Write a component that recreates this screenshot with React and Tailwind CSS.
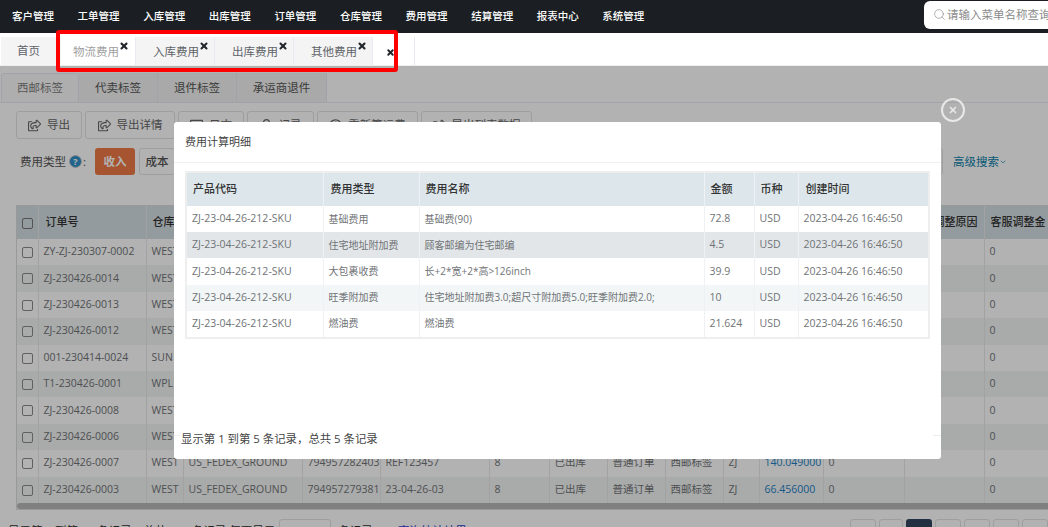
import React from "react";
import { Search, X, ChevronDown } from "lucide-react";
import { FaRegShareSquare, FaRegClock, FaRegUser, FaRegListAlt } from "react-icons/fa";

const menus = ["客户管理", "工单管理", "入库管理", "出库管理", "订单管理", "仓库管理", "费用管理", "结算管理", "报表中心", "系统管理"];

const orders = [
  ["ZY-ZJ-230307-0002", "WEST"],
  ["ZJ-230426-0014", "WEST"],
  ["ZJ-230426-0013", "WEST"],
  ["ZJ-230426-0012", "WEST"],
  ["001-230414-0024", "SUN"],
  ["T1-230426-0001", "WPL"],
  ["ZJ-230426-0008", "WEST"],
  ["ZJ-230426-0006", "WEST"],
  ["ZJ-230426-0007", "WEST", "US_FEDEX_GROUND", "794957282403", "REF123457", "8", "已出库", "普通订单", "西邮标签", "ZJ", "140.049000", "0"],
  ["ZJ-230426-0003", "WEST", "US_FEDEX_GROUND", "794957279381", "23-04-26-03", "8", "已出库", "普通订单", "西邮标签", "ZJ", "66.456000", "0"],
];

const fees = [
  ["基础费用", "基础费(90)", "72.8"],
  ["住宅地址附加费", "顾客邮编为住宅邮编", "4.5"],
  ["大包裹收费", "长+2*宽+2*高>126inch", "39.9"],
  ["旺季附加费", "住宅地址附加费3.0;超尺寸附加费5.0;旺季附加费2.0;", "10"],
  ["燃油费", "燃油费", "21.624"],
];

const feeRowBg = ["bg-white", "bg-[#e2e6e9]", "bg-white", "bg-[#f2f6f6]", "bg-white"];

function PageTab({ label, active, width }) {
  return (
    <div className={`relative h-full flex items-center border-r border-[#e7eaf1] text-[11.5px] ${width} ${active ? "bg-white text-[#a0a0a0] pl-[12px]" : "bg-[#f4f4f4] text-[#5f6368] pl-[17px]"}`}>
      <span className="mt-[2px]">{label}</span>
      <X size={10} strokeWidth={5} className={`absolute top-[4px] text-[#23262b] ${active ? "left-[58px]" : "left-[63px]"}`} />
    </div>
  );
}

function ToolButton({ icon, label, width }) {
  return (
    <div className={`h-[28px] flex items-center justify-center gap-[6px] border border-[#e3e3e3] rounded-[3px] text-[11.5px] text-[#666] ${width}`}>
      {icon}
      <span>{label}</span>
    </div>
  );
}

function OrderRow({ row, index }) {
  const cell = "border-r border-[#e8e8e8] px-[5px] whitespace-nowrap overflow-hidden";
  return (
    <tr className={`h-[26.4px] ${index % 2 ? "bg-[#f3f5f4]" : "bg-white"}`}>
      <td className={`${cell} text-center`}>
        <span className="inline-block w-[11px] h-[11px] border border-[#8a8a8a] rounded-[2px] align-middle" />
      </td>
      <td className={cell}>{row[0]}</td>
      <td className={cell}>{row[1]}</td>
      <td className={cell}>{row[2]}</td>
      <td className={cell}>{row[3]}</td>
      <td className={cell}>{row[4]}</td>
      <td className={cell}>{row[5]}</td>
      <td className={cell}>{row[6]}</td>
      <td className={cell}>{row[7]}</td>
      <td className={cell}>{row[8]}</td>
      <td className={cell}>{row[9]}</td>
      <td className={`${cell} text-[#1b7fc4]`}>{row[10]}</td>
      <td className={cell}>{row[11]}</td>
      <td className={cell} />
      <td className={cell}>0</td>
    </tr>
  );
}

export default function App() {
  return (
    <div className="relative w-[1048px] h-[527px] overflow-hidden bg-white font-['Open_Sans','Noto_Sans_CJK_SC',sans-serif] flex flex-col">
      {/* Top menu */}
      <div className="h-[33px] shrink-0 bg-[#1b1f23] flex items-center pl-[12px] justify-between">
        <div className="flex gap-[23.6px] text-[10.5px] font-medium text-white">
          {menus.map((m) => (
            <span key={m}>{m}</span>
          ))}
        </div>
        <div className="w-[124px] h-[28px] -mt-[4px] bg-white rounded-l-[6px] flex items-center pl-[9px] gap-[1px] text-[11.5px] text-[#8b8b8b] whitespace-nowrap overflow-hidden">
          <Search size={13} strokeWidth={1.2} className="shrink-0" />
          <span>请输入菜单名称查询</span>
        </div>
      </div>

      {/* Page tabs */}
      <div className="h-[33px] shrink-0 pt-[4px] pl-[1px] flex border-b border-[#eeeeee]">
        <div className="w-[60px] h-full bg-[#f4f4f4] flex items-center justify-center text-[11.5px] text-[#5f6368] pr-[5px]">首页</div>
        <PageTab label="物流费用" active width="w-[75px]" />
        <PageTab label="入库费用" width="w-[79px]" />
        <PageTab label="出库费用" width="w-[79px]" />
        <PageTab label="其他费用" width="w-[79px]" />
        <div className="w-[42px] h-full border-r border-[#e7eaf1] bg-white relative">
          <X size={9} strokeWidth={5} className="absolute left-[13px] top-[11px] text-[#23262b]" />
        </div>
      </div>

      {/* Page body behind the dialog */}
      <div className="relative flex-1 overflow-hidden">
        <div className="pt-[7px]">
          <div className="flex h-[30px] pl-[1px] border-b border-[#e7eaf1] text-[11.5px] text-[#555]">
            <div className="w-[78px] bg-[#fafafa] border border-[#e7eaf1] border-b-0 rounded-t-[3px] flex items-center justify-center text-[#7c7c7c]">西邮标签</div>
            <div className="w-[79px] bg-[#f2f2f2] border-r border-[#e7eaf1] flex items-center justify-center">代卖标签</div>
            <div className="w-[79px] bg-[#f2f2f2] border-r border-[#e7eaf1] flex items-center justify-center">退件标签</div>
            <div className="w-[90px] bg-[#f2f2f2] border-r border-[#e7eaf1] flex items-center justify-center">承运商退件</div>
          </div>

          <div className="flex pl-[16px] pt-[8px] gap-[3px]">
            <ToolButton icon={<FaRegShareSquare size={13} />} label="导出" width="w-[66px]" />
            <ToolButton icon={<FaRegShareSquare size={13} />} label="导出详情" width="w-[90px]" />
            <ToolButton icon={<FaRegListAlt size={13} />} label="日志" width="w-[66px]" />
            <ToolButton icon={<FaRegUser size={13} />} label="记录" width="w-[67px]" />
            <ToolButton icon={<FaRegClock size={13} />} label="重新算运费" width="w-[101px]" />
            <ToolButton icon={<FaRegShareSquare size={13} />} label="导出列表数据" width="w-[111px]" />
          </div>

          <div className="flex items-center pl-[20px] pt-[9px] pr-[41px] h-[36px] text-[11.5px] text-[#555]">
            <span>费用类型</span>
            <span className="ml-[3px] w-[13px] h-[13px] rounded-full bg-[#2f8fc9] border border-[#c8c8c8] text-white text-[9px] font-bold flex items-center justify-center">?</span>
            <span className="ml-[1px]">:</span>
            <span className="ml-[9px] w-[40px] h-[27px] rounded-[3px] bg-[#f07a45] text-white font-bold flex items-center justify-center">收入</span>
            <span className="ml-[4px] w-[36px] h-[27px] rounded-[3px] border border-[#e3e3e3] flex items-center justify-center font-medium">成本</span>
            <span className="ml-auto w-[40px] h-[27px] rounded-[3px] border border-[#e3e3e3]" />
            <span className="ml-[10px] text-[#0d7fa8] flex items-center">
              高级搜索
              <ChevronDown size={8} />
            </span>
          </div>

          <div className="mt-[30px] ml-[16px] border border-[#dcdcdc] w-[1040px] overflow-hidden">
            <table className="table-fixed border-collapse text-[10.5px] text-[#707376] w-[1100px]">
              <colgroup>
                <col className="w-[21px]" />
                <col className="w-[108px]" />
                <col className="w-[37px]" />
                <col className="w-[119px]" />
                <col className="w-[78px]" />
                <col className="w-[109px]" />
                <col className="w-[60px]" />
                <col className="w-[58px]" />
                <col className="w-[58px]" />
                <col className="w-[58px]" />
                <col className="w-[36px]" />
                <col className="w-[64px]" />
                <col className="w-[81px]" />
                <col className="w-[80px]" />
                <col className="w-[133px]" />
              </colgroup>
              <thead>
                <tr className="h-[33px] bg-[#d5dfe4] text-[11px] font-medium text-[#333] text-left">
                  <th className="border-r border-[#e8e8e8] text-center font-medium">
                    <span className="inline-block w-[11px] h-[11px] border border-[#777] rounded-[2px] align-middle" />
                  </th>
                  <th className="border-r border-[#e8e8e8] pl-[7px] font-medium">订单号</th>
                  <th className="border-r border-[#e8e8e8] px-[6px] font-medium whitespace-nowrap overflow-hidden">仓库</th>
                  <th className="border-r border-[#e8e8e8] font-medium" />
                  <th className="border-r border-[#e8e8e8] font-medium" />
                  <th className="border-r border-[#e8e8e8] font-medium" />
                  <th className="border-r border-[#e8e8e8] font-medium" />
                  <th className="border-r border-[#e8e8e8] font-medium" />
                  <th className="border-r border-[#e8e8e8] font-medium" />
                  <th className="border-r border-[#e8e8e8] font-medium" />
                  <th className="border-r border-[#e8e8e8] font-medium" />
                  <th className="border-r border-[#e8e8e8] font-medium" />
                  <th className="border-r border-[#e8e8e8] font-medium" />
                  <th className="border-r border-[#e8e8e8] px-[6px] font-medium whitespace-nowrap text-right">调整原因</th>
                  <th className="border-r border-[#e8e8e8] px-[6px] font-medium whitespace-nowrap">客服调整金</th>
                </tr>
              </thead>
              <tbody>
                {orders.map((row, i) => (
                  <OrderRow key={row[0]} row={row} index={i} />
                ))}
              </tbody>
            </table>
            <div className="h-[6px] bg-[#b8b8b8] rounded-[3px]" />
          </div>

          <div className="flex justify-between mt-[9px] pl-[8px] text-[11.5px] text-[#333]">
            <div className="flex items-start">
              <span className="mt-[3px] whitespace-nowrap">显示第 1 到第 20 条记录，总共 120 条记录 每页显示</span>
              <span className="ml-[4px] w-[52px] h-[28px] border border-[#e3e3e3] rounded-[3px]" />
              <span className="ml-[7px] mt-[3px] whitespace-nowrap">条记录</span>
              <span className="ml-[25px] mt-[3px] whitespace-nowrap text-[#2a3fd0]">查询统计结果</span>
            </div>
            <div className="flex gap-[3px]">
              <span className="w-[26px] h-[26px] border border-[#e3e3e3] rounded-[3px]" />
              <span className="w-[24px] h-[26px] border border-[#e3e3e3] rounded-[3px]" />
              <span className="w-[26px] h-[26px] rounded-[3px] bg-[#33455f]" />
              <span className="w-[26px] h-[26px] border border-[#e3e3e3] rounded-[3px]" />
              <span className="w-[26px] h-[26px] border border-[#e3e3e3] rounded-[3px]" />
              <span className="w-[26px] h-[26px] border border-[#e3e3e3] rounded-[3px]" />
              <span className="w-[26px] h-[26px] border border-[#e3e3e3] rounded-[3px]" />
            </div>
          </div>
        </div>

        {/* Dim layer and dialog */}
        <div className="absolute inset-0 bg-black/30">
          <div className="absolute left-[174px] top-[56px] w-[767px] h-[337px] bg-white rounded-[3px] flex flex-col">
            <div className="h-[41px] shrink-0 border-b border-[#f0f0f0] pl-[11px] flex items-center text-[11px] text-[#444]">费用计算明细</div>
            <div className="mx-[11px] mt-[8px] w-[745px] border-2 border-[#eeeeee]">
              <table className="w-full table-fixed border-collapse text-[10.5px] text-[#707376]">
                <colgroup>
                  <col className="w-[136px]" />
                  <col className="w-[96px]" />
                  <col className="w-[285px]" />
                  <col className="w-[50px]" />
                  <col className="w-[44px]" />
                  <col />
                </colgroup>
                <thead>
                  <tr className="h-[33px] bg-[#dce6eb] text-[11px] text-[#333] text-left">
                    <th className="font-medium pl-[6px] border-r border-[#eef2f4]">产品代码</th>
                    <th className="font-medium pl-[7px] border-r border-[#eef2f4]">费用类型</th>
                    <th className="font-medium pl-[6px] border-r border-[#eef2f4]">费用名称</th>
                    <th className="font-medium pl-[6px] border-r border-[#eef2f4]">金额</th>
                    <th className="font-medium pl-[6px] border-r border-[#eef2f4]">币种</th>
                    <th className="font-medium pl-[7px]">创建时间</th>
                  </tr>
                </thead>
                <tbody>
                  {fees.map((f, i) => (
                    <tr key={f[0]} className={`h-[26.2px] ${feeRowBg[i]}`}>
                      <td className="pl-[5px] border-r border-[#eef2f4] whitespace-nowrap">ZJ-23-04-26-212-SKU</td>
                      <td className="pl-[5px] border-r border-[#eef2f4] text-[10px] whitespace-nowrap">{f[0]}</td>
                      <td className="pl-[5px] border-r border-[#eef2f4] text-[10px] whitespace-nowrap">{f[1]}</td>
                      <td className="pl-[5px] border-r border-[#eef2f4]">{f[2]}</td>
                      <td className="pl-[5px] border-r border-[#eef2f4]">USD</td>
                      <td className="pl-[5px] whitespace-nowrap">2023-04-26 16:46:50</td>
                    </tr>
                  ))}
                </tbody>
              </table>
            </div>
            <div className="mt-auto mb-[12px] pl-[7px] text-[11.4px] text-[#444]">显示第 1 到第 5 条记录，总共 5 条记录</div>
            <span className="absolute left-0 top-[313px] w-[6px] h-px bg-[#efefef]" />
            <span className="absolute right-0 top-[313px] w-[8px] h-px bg-[#efefef]" />
          </div>
          <div className="absolute left-[941px] top-[32px] w-[24px] h-[24px] rounded-full border-2 border-[#e8e8e8] flex items-center justify-center text-[#e8e8e8]">
            <X size={10} strokeWidth={4} />
          </div>
        </div>
      </div>

      {/* Red annotation around the tabs */}
      <div className="absolute left-[56px] top-[30px] w-[342px] h-[42px] border-[4px] border-[#ff0000] rounded-[3px]" />
    </div>
  );
}
